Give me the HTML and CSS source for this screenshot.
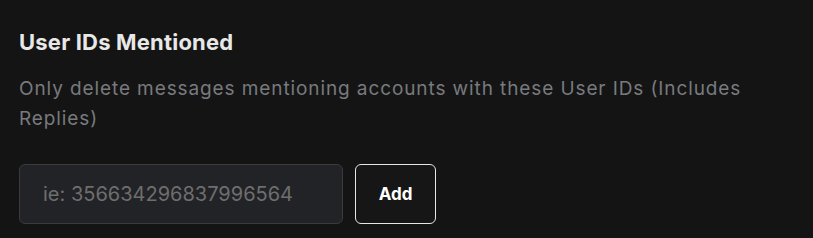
FILE: index.html
```html
<!DOCTYPE html>
<html>
<head>
    <title>User IDs Mentioned</title>
    <link rel="stylesheet" href="styles.css">
</head>
<body>
    <div class="section">
        <h3 class="section-title">User IDs Mentioned</h3>
        <p class="section-desc">Only delete messages mentioning accounts with these User IDs (Includes Replies)</p>
        <div class="id-row">
            <input class="id-input" type="text" placeholder="ie: 356634296837996564">
            <button class="add-btn">Add</button>
        </div>
    </div>
</body>
</html>
```

FILE: styles.css
```css
body {
    margin: 0;
    padding: 0;
    background-color: #141414;
    font-family: Inter, 'Noto Sans', sans-serif;
    color: #e6e6e6;
}

.section {
    padding: 29px 19px 0;
    width: 740px;
}

.section-title {
    margin: 0 0 19px;
    font-size: 22px;
    font-weight: 700;
    line-height: 26px;
    letter-spacing: 0.2px;
    color: #e8e8e8;
}

.section-desc {
    margin: 0 0 30px;
    font-size: 19px;
    line-height: 30px;
    letter-spacing: 0.9px;
    color: #787a7e;
}

.id-row {
    display: flex;
    gap: 12px;
}

.id-input {
    width: 324px;
    height: 60px;
    box-sizing: border-box;
    padding: 0 23px;
    background: #222326;
    border: 1px solid #3a3b3f;
    border-radius: 6px;
    font-family: Inter, 'Noto Sans', sans-serif;
    font-size: 20px;
    color: #ddd;
    outline: none;
}

.id-input::placeholder {
    color: #6e6e6e;
}

.add-btn {
    width: 81px;
    height: 60px;
    background: #161616;
    border: 1px solid #e6e6e6;
    border-radius: 6px;
    font-family: Inter, 'Noto Sans', sans-serif;
    font-size: 17px;
    font-weight: 700;
    color: #fff;
    cursor: pointer;
}
```
